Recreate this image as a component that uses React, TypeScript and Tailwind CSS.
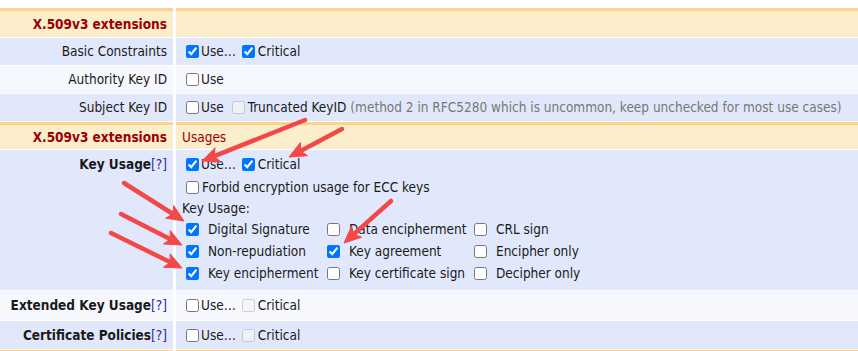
import React from "react";

const FONT = "font-['DejaVu_Sans_Condensed','DejaVu_Sans',sans-serif]";

function Box({ checked, disabled, className }: { checked?: boolean; disabled?: boolean; className?: string }) {
  return (
    <input
      type="checkbox"
      readOnly
      checked={!!checked}
      disabled={disabled}
      className={`w-[13px] h-[13px] shrink-0 ${className ?? ""}`}
    />
  );
}

function Arrow({ x1, y1, x2, y2 }: { x1: number; y1: number; x2: number; y2: number }) {
  const dx = x2 - x1;
  const dy = y2 - y1;
  const len = Math.hypot(dx, dy);
  const ux = dx / len;
  const uy = dy / len;
  const hl = 17;
  const hw = 7.5;
  const bx = x2 - ux * hl;
  const by = y2 - uy * hl;
  const pts = `${x2},${y2} ${bx - uy * hw},${by + ux * hw} ${bx + ux * 4},${by + uy * 4} ${bx + uy * hw},${by - ux * hw}`;
  return (
    <g>
      <line x1={x1} y1={y1} x2={bx + ux * 3} y2={by + uy * 3} stroke="#f24848" strokeWidth={4.5} strokeLinecap="round" />
      <polygon points={pts} fill="#f24848" stroke="#f24848" strokeWidth={1} strokeLinejoin="round" />
    </g>
  );
}

const labelCell = "flex items-center justify-end pr-[6px] text-[#1a1a1a]";
const valueCell = "flex items-center pl-[6px] text-[#1a1a1a]";

function Help() {
  return <span className="font-normal text-[#2b2b9a]">[?]</span>;
}

const usages: [string, boolean][][] = [
  [["Digital Signature", true], ["Data encipherment", false], ["CRL sign", false]],
  [["Non-repudiation", true], ["Key agreement", true], ["Encipher only", false]],
  [["Key encipherment", true], ["Key certificate sign", false], ["Decipher only", false]],
];

export default function App() {
  return (
    <div className={`relative w-[858px] h-[351px] overflow-hidden bg-white text-[13.5px] ${FONT}`}>
      <div className="grid grid-cols-[173px_1fr] gap-x-[3px] gap-y-px pt-[8px]">
        {/* section header */}
        <div className="h-[29px] border-t-[3px] border-[#fad48c] bg-[#fdeecb] flex items-center justify-end pr-[6px] font-bold text-[#990000]">
          X.509v3 extensions
        </div>
        <div className="h-[29px] border-t-[3px] border-[#fad48c] bg-[#fdeecb]" />

        {/* basic constraints */}
        <div className={`h-[27px] bg-[#e2e8fc] ${labelCell}`}>Basic Constraints</div>
        <div className={`h-[27px] bg-[#e2e8fc] ${valueCell}`}>
          <Box checked className="ml-[4px] mr-[2px]" />
          <span>Use…</span>
          <Box checked className="ml-[6px] mr-[3px]" />
          <span>Critical</span>
        </div>

        {/* authority key id */}
        <div className={`h-[27px] bg-[#f6f8fe] ${labelCell}`}>Authority Key ID</div>
        <div className={`h-[27px] bg-[#f6f8fe] ${valueCell}`}>
          <Box className="ml-[4px] mr-[2px]" />
          <span>Use</span>
        </div>

        {/* subject key id */}
        <div className={`h-[27px] bg-[#e2e8fc] ${labelCell}`}>Subject Key ID</div>
        <div className={`h-[27px] bg-[#e2e8fc] ${valueCell} whitespace-nowrap`}>
          <Box className="ml-[4px] mr-[2px]" />
          <span>Use</span>
          <Box disabled className="ml-[8px] mr-[3px]" />
          <span>Truncated KeyID</span>
          <span className="ml-[4px] text-[#777777]">
            (method 2 in RFC5280 which is uncommon, keep unchecked for most use cases)
          </span>
        </div>

        {/* usages header */}
        <div className="h-[27px] border-t-[3px] border-[#fad48c] bg-[#fdeecb] flex items-center justify-end pr-[6px] font-bold text-[#990000]">
          X.509v3 extensions
        </div>
        <div className="h-[27px] border-t-[3px] border-[#fad48c] bg-[#fdeecb] flex items-center pl-[6px] text-[#990000]">
          Usages
        </div>

        {/* key usage */}
        <div className="h-[140px] bg-[#e2e8fc] flex justify-end items-start pr-[6px] pt-[3px] text-[#1a1a1a]">
          <div className="h-[23px] flex items-center font-bold">
            Key Usage
            <Help />
          </div>
        </div>
        <div className="h-[140px] bg-[#e2e8fc] flex flex-col pl-[6px] pt-[3px] text-[#1a1a1a]">
          <div className="h-[23px] flex items-center">
            <Box checked className="ml-[4px] mr-[2px]" />
            <span>Use…</span>
            <Box checked className="ml-[6px] mr-[3px]" />
            <span>Critical</span>
          </div>
          <div className="h-[23px] flex items-center">
            <Box className="ml-[4px] mr-[3px]" />
            <span>Forbid encryption usage for ECC keys</span>
          </div>
          <div className="h-[19px] flex items-center">Key Usage:</div>
          <div className="grid grid-cols-[141px_147px_auto] ml-[4px]">
            {usages.flat().map(([name, on]) => (
              <div key={name} className="h-[22px] flex items-center whitespace-nowrap">
                <Box checked={on} className="mr-[9px]" />
                <span>{name}</span>
              </div>
            ))}
          </div>
        </div>

        {/* extended key usage */}
        <div className={`h-[29px] bg-[#f6f8fe] ${labelCell} font-bold`}>
          Extended Key Usage
          <Help />
        </div>
        <div className={`h-[29px] bg-[#f6f8fe] ${valueCell}`}>
          <Box className="ml-[4px] mr-[2px]" />
          <span>Use…</span>
          <Box disabled className="ml-[6px] mr-[3px]" />
          <span>Critical</span>
        </div>

        {/* certificate policies */}
        <div className={`h-[28px] bg-[#e2e8fc] ${labelCell} font-bold`}>
          Certificate Policies
          <Help />
        </div>
        <div className={`h-[28px] bg-[#e2e8fc] ${valueCell}`}>
          <Box className="ml-[4px] mr-[2px]" />
          <span>Use…</span>
          <Box disabled className="ml-[6px] mr-[3px]" />
          <span>Critical</span>
        </div>

        {/* next section (cut off) */}
        <div className="h-[27px] border-t-[3px] border-[#fad48c] bg-[#fdeecb]" />
        <div className="h-[27px] border-t-[3px] border-[#fad48c] bg-[#fdeecb]" />
      </div>

      {/* annotation arrows */}
      <svg className="absolute inset-0 pointer-events-none" width={858} height={351}>
        <Arrow x1={305} y1={120} x2={202} y2={161} />
        <Arrow x1={342} y1={129} x2={289} y2={157} />
        <Arrow x1={124} y1={183} x2={184} y2={221} />
        <Arrow x1={121} y1={214} x2={182} y2={245} />
        <Arrow x1={111} y1={233} x2={182} y2={268} />
        <Arrow x1={391} y1={201} x2={344} y2={243} />
      </svg>
    </div>
  );
}
